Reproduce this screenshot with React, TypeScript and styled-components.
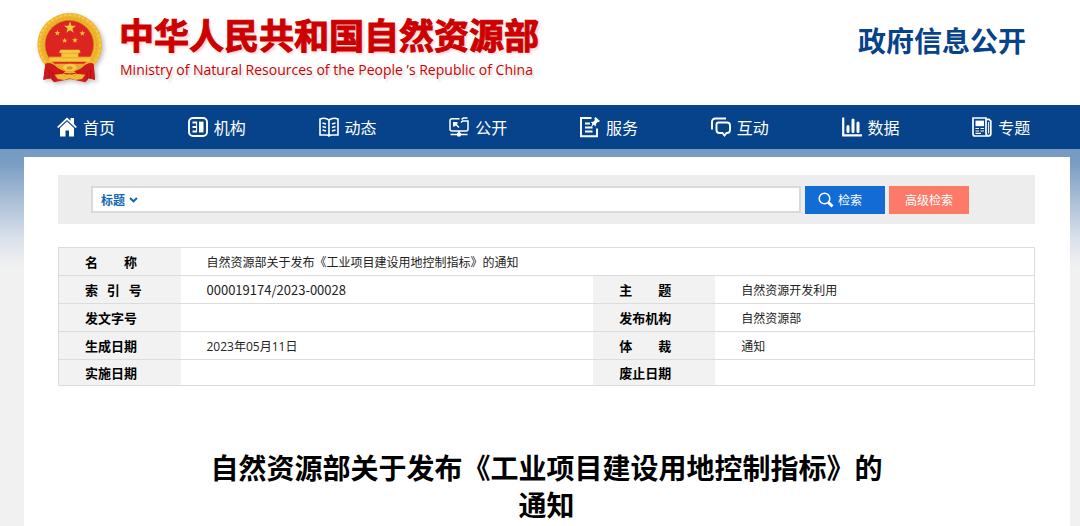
import React from "react";
import styled, { createGlobalStyle } from "styled-components";

const cjk = `"Noto Sans CJK SC", "Open Sans", sans-serif`;
const latin = `"Open Sans", "Noto Sans CJK SC", sans-serif`;

const GlobalStyle = createGlobalStyle`
  *, *::before, *::after { box-sizing: border-box; }
  body { margin: 0; background: #f1f1f1; color: #000; font-family: ${cjk}; font-size: 12px; }
  button, input, select { font: inherit; }
  h1, p { margin: 0; }
`;

const Header = styled.header`
  display: flex;
  justify-content: space-between;
  align-items: flex-start;
  min-height: 105px;
  padding: 12px 54px 0 35px;
  background: #fff;
`;

const Brand = styled.a`
  display: flex;
  gap: 14px;
  color: #cc0000;
  text-decoration: none;
`;

const Emblem = styled.svg`
  width: 70px;
  height: 72px;
  flex: none;
  filter: drop-shadow(2px 2px 2px rgba(0, 0, 0, 0.25));
`;

const BrandText = styled.div`
  display: flex;
  flex-direction: column;
`;

const MinistryName = styled.span`
  font-size: 35px;
  font-weight: 700;
  line-height: 44px;
  white-space: nowrap;
  -webkit-text-stroke: 1px #cc0000;
  text-shadow: 2px 2px 3px rgba(204, 0, 0, 0.2);
`;

const MinistryEnglish = styled.span`
  padding-left: 1px;
  font-family: ${latin};
  font-size: 14px;
  line-height: 28px;
  white-space: nowrap;
  text-shadow: 2px 3px 2px rgba(0, 0, 0, 0.15);
`;

const Section = styled.p`
  padding-top: 8px;
  color: #07438a;
  font-size: 28px;
  font-weight: 700;
  line-height: 40px;
  white-space: nowrap;
`;

const Nav = styled.nav`
  display: grid;
  grid-template-columns: repeat(8, 1fr);
  height: 44px;
  padding: 0 10px 0 24px;
  background: #07438a;
`;

const NavLink = styled.a`
  display: flex;
  align-items: center;
  gap: 6px;
  padding-left: 33px;
  color: #fff;
  font-size: 16px;
  line-height: 24px;
  text-decoration: none;
  white-space: nowrap;
`;

const NavIcon = styled.svg`
  width: 20px;
  height: 20px;
  flex: none;
  overflow: visible;
  fill: none;
  stroke: #fff;
  stroke-width: 1.9;
`;

const Backdrop = styled.main`
  padding: 8px 10px 0 24px;
  background: linear-gradient(#769ac1 0, #7a9dc3 14px, #b0c3d9 56px, #d8e0ea 88px, #f1f1f1 118px);
`;

const Panel = styled.div`
  min-height: calc(100vh - 157px);
  padding: 18px 35px 0 34px;
  background: #fff;
`;

const Search = styled.form`
  display: flex;
  align-items: center;
  gap: 4px;
  height: 49px;
  padding: 0 66px 0 33px;
  background: #ededed;
`;

const Field = styled.div`
  display: flex;
  flex: 1;
  align-items: center;
  height: 27px;
  padding-left: 8px;
  border: 2px solid #dadada;
  background: #fff;
`;

const Scope = styled.select`
  appearance: none;
  width: 27px;
  padding: 0;
  border: 0;
  background: none;
  color: #1068b4;
  font-weight: 700;
`;

const Chevron = styled.svg`
  width: 9px;
  height: 6px;
  margin-left: 1px;
  fill: none;
  stroke: #1068b4;
  stroke-width: 2;
`;

const Query = styled.input`
  flex: 1;
  min-width: 0;
  padding: 0 8px;
  border: 0;
  outline: 0;
  background: none;
`;

const Button = styled.button<{ $tone: string; $icon?: boolean }>`
  display: flex;
  align-items: center;
  justify-content: center;
  gap: 4px;
  width: 80px;
  height: 28px;
  padding: 0 ${(p) => (p.$icon ? 10 : 0)}px 0 0;
  border: 0;
  background: ${(p) => p.$tone};
  color: #fff;
  cursor: pointer;
`;

const Lens = styled.svg`
  width: 16px;
  height: 16px;
  fill: none;
  stroke: #fff;
`;

const Meta = styled.table`
  width: 100%;
  height: 139px;
  margin-top: 23px;
  border: 1px solid #dcdcdc;
  border-collapse: collapse;
  table-layout: fixed;
`;

const Row = styled.tr`
  border-bottom: 1px solid #dcdcdc;
`;

const Label = styled.th`
  padding: 0 0 0 26px;
  background: #f2f2f2;
  font-size: 13px;
  font-weight: 700;
  line-height: 20px;
  text-align: left;
  white-space: pre;
`;

const Value = styled.td<{ $code?: boolean }>`
  padding: ${(p) => (p.$code ? 0 : 2)}px 0 0 26px;
  color: #222;
  font-family: ${(p) => (p.$code ? cjk : latin)};
  font-size: ${(p) => (p.$code ? 13 : 12)}px;
  line-height: 20px;
`;

const Col = styled.col<{ $share: string }>`
  width: ${(p) => p.$share};
`;

const Title = styled.h1`
  max-width: 690px;
  margin: 0 auto;
  padding: 63px 0 0;
  font-size: 28px;
  font-weight: 700;
  line-height: 37px;
  text-align: center;
`;

const star = (cx: number, cy: number, r: number) =>
  Array.from({ length: 10 }, (_, i) => {
    const a = (Math.PI * i) / 5 - Math.PI / 2;
    const d = i % 2 ? r * 0.4 : r;
    return `${(cx + d * Math.cos(a)).toFixed(1)},${(cy + d * Math.sin(a)).toFixed(1)}`;
  }).join(" ");

const NationalEmblem = () => (
  <Emblem viewBox="45 35 210 216" aria-hidden="true">
    <path d="M78 180 L70 238 L92 234 L102 246 L132 240 L150 236 L168 240 L196 246 L204 234 L225 238 L219 180 Z" fill="#d81e1c" />
    <ellipse cx="149" cy="133" rx="97" ry="95" fill="#eeb52c" />
    <ellipse cx="149" cy="133" rx="91" ry="89" fill="none" stroke="#f6cb4a" strokeWidth="6" strokeDasharray="9 5" />
    <ellipse cx="149" cy="133" rx="81" ry="79" fill="none" stroke="#e3a526" strokeWidth="4" strokeDasharray="5 6" />
    <ellipse cx="148" cy="133" rx="73" ry="73" fill="#dc2420" stroke="#c98a18" strokeWidth="2" />
    <g fill="#f6c83c">
      <polygon points={star(150, 82, 19)} />
      <polygon points={star(112, 98, 9)} />
      <polygon points={star(187, 99, 9)} />
      <polygon points={star(134, 121, 9)} />
      <polygon points={star(165, 120, 9)} />
      <path d="M121 148 H178 L182 157 H175 V169 H211 V184 H88 V169 H124 V157 H117 Z" />
    </g>
    <path d="M121 159 H178 M90 172 H209" stroke="#e0982a" strokeWidth="2" />
    <path d="M76 190 Q92 184 110 200 Q124 209 136 212 L104 246 L92 234 L70 238 Z M221 190 Q206 184 188 200 Q174 209 162 212 L196 246 L204 234 L225 238 Z" fill="#cf1a1b" />
    <path d="M105 190 H194 L184 204 L166 211 H132 L114 204 Z" fill="#e9ab2b" />
    <ellipse cx="149" cy="201" rx="20" ry="11" fill="#f6cc4c" />
    <ellipse cx="149" cy="203" rx="9" ry="5" fill="#d99420" />
    <path d="M118 211 Q149 228 180 211 L172 218 Q149 229 126 218 Z" fill="#b81517" />
    <path d="M104 223 L124 221 L134 228 L149 222 L164 228 L174 221 L196 223 L186 236 L165 239 L149 234 L133 239 L113 236 Z" fill="#f1bb33" />
    <path d="M88 208 V232 M98 214 V240 M211 208 V232 M201 214 V240" stroke="#a91215" strokeWidth="3" />
  </Emblem>
);

const icons: Record<string, React.ReactNode> = {
  home: (
    <g fill="#fff" stroke="none">
      <path d="M10 0.5 L13.5 3.8 V1 H17 V7 L20 10 L18.6 11 L10 3 L1.4 11 L0 10 Z" />
      <path d="M10 4.4 L17 11 V19.5 H12 V13.5 H8.5 V19.5 H3 V11 Z" />
    </g>
  ),
  org: (
    <>
      <rect x="1" y="1" width="18" height="18" rx="4" />
      <path d="M4.5 5.5 H9 M4.5 10 H9 M4.5 14.5 H9" strokeWidth="1.8" />
      <path d="M8.6 5 V15" strokeWidth="1" />
      <rect x="11" y="4.6" width="4.5" height="10.8" fill="#fff" stroke="none" />
    </>
  ),
  news: (
    <>
      <path d="M10 3 Q6 0 1 2 V18 H7.5 Q9 18 10 19 Q11 18 12.5 18 H19 V2 Q14 0 10 3 V18" strokeWidth="1.6" />
      <path d="M3.5 6 L7 7 M3.5 9.5 L7 10.5 M3.5 13 L7 14 M16.5 6 L13 7 M16.5 9.5 L13 10.5 M16.5 13 L13 14" strokeWidth="1.5" />
    </>
  ),
  open: (
    <>
      <path d="M10.5 1.7 H3 Q1 1.7 1 3.5 V12 Q1 14 3 14 H17 Q19 14 19 12 V4 H13.5 L12 5.5" strokeWidth="1.5" />
      <path d="M12.5 2.3 L14.5 1 H18.5 M10 14 V17 M1.5 17.5 H18.5" strokeWidth="1.6" />
      <path d="M4 5 H8.5 V6.5 L8 7.5 L10.5 10 L9.5 11 L7 8.5 L5.5 9.5 H4 Z" fill="#fff" stroke="none" />
      <circle cx="10" cy="17.5" r="2.2" fill="#fff" stroke="none" />
    </>
  ),
  service: (
    <>
      <path d="M11.5 1 H1 V19.2 H17 V11.5" />
      <path d="M5 6.5 H10 M5 10.5 H12.5 M5 14.5 H12.5" />
      <path d="M15.5 0 L20 4 L18.3 5.3 L17.3 5.2 L16 7 L15.7 9.4 L13.7 7.8 L11 10.2 L12.4 6.8 L10.8 5.1 L13.3 4.8 L15 3 L14.2 1.7 Z" fill="#fff" stroke="none" />
    </>
  ),
  interact: (
    <>
      <path d="M1 12.5 V5 Q1 1.5 4.5 1.5 H15" />
      <path d="M7.5 5.5 H16 Q19 5.5 19 8.5 V13 Q19 16 16 16 H15.5 L13.5 18.5 L11.5 16 H8.5 Q5.5 16 5.5 13 V7.5 Q5.5 5.5 7.5 5.5 Z" />
    </>
  ),
  data: (
    <>
      <path d="M1.2 0.5 V18.3 H20" strokeWidth="2.2" />
      <path d="M6 9.5 V14.5 M11 3 V14.5 M16 6 V14.5" strokeWidth="3" strokeLinecap="round" />
    </>
  ),
  topic: (
    <>
      <path d="M14 15.5 V1 H1 V17 Q1 19 3 19 H16 Q14 18.5 14 15.5 M14 2.3 H17 L18.8 4 V17 Q18.5 19 16 19" strokeWidth="1.7" />
      <path d="M16.6 5 V16.5" strokeWidth="1" />
      <rect x="3.5" y="3.6" width="8.5" height="5.6" fill="#fff" stroke="none" />
      <path d="M3.5 11.5 H7 M8.5 11.5 H12 M3.5 14 H7 M8.5 14 H12 M3.5 16.3 H9" strokeWidth="1.2" />
    </>
  ),
};

const sections = [
  ["home", "首页"],
  ["org", "机构"],
  ["news", "动态"],
  ["open", "公开"],
  ["service", "服务"],
  ["interact", "互动"],
  ["data", "数据"],
  ["topic", "专题"],
];

export default function App() {
  return (
    <>
      <GlobalStyle />
      <Header>
        <Brand href="#">
          <NationalEmblem />
          <BrandText>
            <MinistryName>中华人民共和国自然资源部</MinistryName>
            <MinistryEnglish>Ministry of Natural Resources of the People ’s Republic of China</MinistryEnglish>
          </BrandText>
        </Brand>
        <Section>政府信息公开</Section>
      </Header>
      <Nav>
        {sections.map(([icon, name]) => (
          <NavLink href="#" key={icon}>
            <NavIcon viewBox="0 0 20 20" aria-hidden="true">{icons[icon]}</NavIcon>
            {name}
          </NavLink>
        ))}
      </Nav>
      <Backdrop>
        <Panel>
          <Search onSubmit={(e) => e.preventDefault()}>
            <Field>
              <Scope aria-label="检索范围">
                <option>标题</option>
              </Scope>
              <Chevron viewBox="0 0 9 6" aria-hidden="true">
                <path d="M1 1 L4.5 4.3 L8 1" />
              </Chevron>
              <Query type="text" aria-label="检索词" />
            </Field>
            <Button type="submit" $tone="#136bd6" $icon>
              <Lens viewBox="0 0 16 16" aria-hidden="true">
                <circle cx="6.5" cy="6.5" r="5.3" strokeWidth="1.5" />
                <path d="M10.5 10.5 L14.5 14.5" strokeWidth="3" />
              </Lens>
              检索
            </Button>
            <Button type="button" $tone="#fd7a69">高级检索</Button>
          </Search>
          <Meta>
            <colgroup>
              <Col $share="12.5%" />
              <Col $share="42.3%" />
              <Col $share="12.5%" />
              <Col $share="32.7%" />
            </colgroup>
            <tbody>
              <Row>
                <Label scope="row">名　　称</Label>
                <Value colSpan={3}>自然资源部关于发布《工业项目建设用地控制指标》的通知</Value>
              </Row>
              <Row>
                <Label scope="row">{"索   引   号"}</Label>
                <Value $code>000019174/2023-00028</Value>
                <Label scope="row">主　　题</Label>
                <Value>自然资源开发利用</Value>
              </Row>
              <Row>
                <Label scope="row">发文字号</Label>
                <Value />
                <Label scope="row">发布机构</Label>
                <Value>自然资源部</Value>
              </Row>
              <Row>
                <Label scope="row">生成日期</Label>
                <Value>2023年05月11日</Value>
                <Label scope="row">体　　裁</Label>
                <Value>通知</Value>
              </Row>
              <Row>
                <Label scope="row">实施日期</Label>
                <Value />
                <Label scope="row">废止日期</Label>
                <Value />
              </Row>
            </tbody>
          </Meta>
          <Title>自然资源部关于发布《工业项目建设用地控制指标》的通知</Title>
        </Panel>
      </Backdrop>
    </>
  );
}
